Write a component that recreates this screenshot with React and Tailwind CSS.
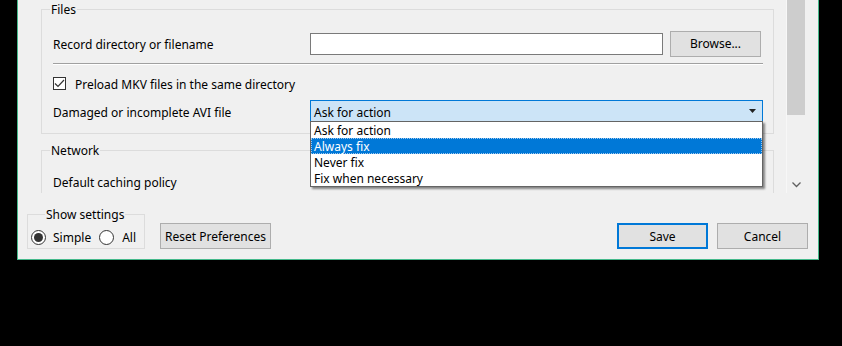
import React from "react";

const font = { fontFamily: '"Noto Sans", "Open Sans", sans-serif' };

const GroupBox = ({ title, className, labelClass = "left-[8px]", children }) => (
  <div className={`relative border border-[#dcdcdc] ${className}`}>
    <span className={`absolute -top-[8px] ${labelClass} bg-[#f0f0f0] px-[1px] leading-[16px]`}>{title}</span>
    {children}
  </div>
);

const Button = ({ children, className = "" }) => (
  <button className={`h-[26px] bg-[#e1e1e1] border border-[#adadad] text-[12px] leading-none text-black ${className}`}>
    {children}
  </button>
);

const Radio = ({ checked }) => (
  <span className="w-[15px] h-[15px] rounded-full border border-[#333] bg-white flex items-center justify-center">
    {checked && <span className="w-[9px] h-[9px] rounded-full bg-[#333]" />}
  </span>
);

const options = ["Ask for action", "Always fix", "Never fix", "Fix when necessary"];

export default function App() {
  return (
    <div className="w-[842px] h-[346px] bg-black overflow-hidden text-[12px] text-black" style={font}>
      <div className="ml-[17px] w-[802px] h-[260px] bg-[#f0f0f0] border-x border-b border-[#45b98b] flex flex-col">
        {/* scroll area */}
        <div className="h-[193px] flex overflow-hidden">
          <div className="flex-1 pl-[23px] pr-[12px]">
            <GroupBox title="Files" className="mt-[9px] h-[125px] pl-[11px] pr-[10px] pt-[20px]">
              <div className="flex items-center h-[26px] pt-[1px]">
                <span className="w-[257px] pt-[2px]">Record directory or filename</span>
                <div className="flex-1 h-[22px] bg-white border border-[#7a7a7a]" />
                <Button className="ml-[7px] mr-[2px] w-[91px]">Browse...</Button>
              </div>
              <div className="mt-[7px] h-px bg-[#a0a0a0] border-b border-white box-content" />
              <div className="flex items-center h-[24px] mt-[6px]">
                <span className="w-[13px] h-[13px] border border-[#333] bg-white flex items-center justify-center">
                  <svg width="11" height="9" viewBox="0 0 11 9">
                    <path d="M1 4.5 L4 7.5 L10 1" fill="none" stroke="#333" strokeWidth="1.2" />
                  </svg>
                </span>
                <span className="ml-[9px] pt-[3px]">Preload MKV files in the same directory</span>
              </div>
              <div className="flex items-center h-[22px] mt-[5px]">
                <span className="w-[257px] pt-[3px]">Damaged or incomplete AVI file</span>
                <div className="relative flex-1 h-[22px]">
                  <div className="h-full bg-[#cce4f7] border border-[#0078d7] flex items-center pl-[3px] pr-[6px]">
                    <span className="flex-1 pt-[3px]">Ask for action</span>
                    <svg width="7" height="4" viewBox="0 0 7 4">
                      <path d="M0 0 H7 L3.5 4 Z" fill="#222" />
                    </svg>
                  </div>
                  <div className="absolute left-0 right-0 top-[21px] z-10 bg-white border border-[#646464] shadow-[2px_2px_2px_rgba(0,0,0,0.45)]">
                    {options.map((o) => (
                      <div
                        key={o}
                        className={`h-[16px] leading-[17px] pl-[3px] ${
                          o === "Always fix"
                            ? "bg-[#0078d7] text-white outline-1 outline-dotted -outline-offset-1 outline-[#9fc8ef]"
                            : ""
                        }`}
                      >
                        {o}
                      </div>
                    ))}
                  </div>
                </div>
              </div>
            </GroupBox>
            <GroupBox title="Network" className="mt-[16px] h-[80px] pl-[11px] pr-[10px] pt-[20px]">
              <div className="flex items-center h-[22px] pt-[2px]">
                <span className="w-[257px]">Default caching policy</span>
              </div>
            </GroupBox>
          </div>
          {/* scrollbar */}
          <div className="w-[19px] flex flex-col bg-[#f0f0f0] border-l border-[#f7f7f7]">
            <div className="h-[115px] bg-[#cdcdcd]" />
            <div className="flex-1" />
            <div className="h-[16px] flex items-center justify-center">
              <svg width="9" height="6" viewBox="0 0 9 6">
                <path d="M0.5 0.5 L4.5 4.5 L8.5 0.5" fill="none" stroke="#606060" strokeWidth="1.3" />
              </svg>
            </div>
          </div>
          <div className="w-[13px]" />
        </div>
        {/* bottom bar */}
        <div className="flex items-start">
          <GroupBox
            title="Show settings"
            labelClass="left-[17px]"
            className="ml-[9px] mt-[21px] w-[118px] h-[35px] pl-[3px] pt-[14px]"
          >
            <div className="flex items-center h-[16px]">
              <Radio checked />
              <span className="ml-[7px] pt-[1px]">Simple</span>
              <span className="ml-[8px]"><Radio /></span>
              <span className="ml-[8px] pt-[1px]">All</span>
            </div>
          </GroupBox>
          <Button className="ml-[15px] mt-[30px] w-[111px] pt-[1px]">Reset Preferences</Button>
          <div className="flex-1" />
          <button className="mt-[30px] w-[91px] h-[26px] bg-[#e1e1e1] border-2 border-[#0078d7] text-[12px] leading-none pt-[1px]">Save</button>
          <Button className="ml-[9px] mt-[30px] w-[91px] mr-[10px] pt-[1px]">Cancel</Button>
        </div>
      </div>
    </div>
  );
}
